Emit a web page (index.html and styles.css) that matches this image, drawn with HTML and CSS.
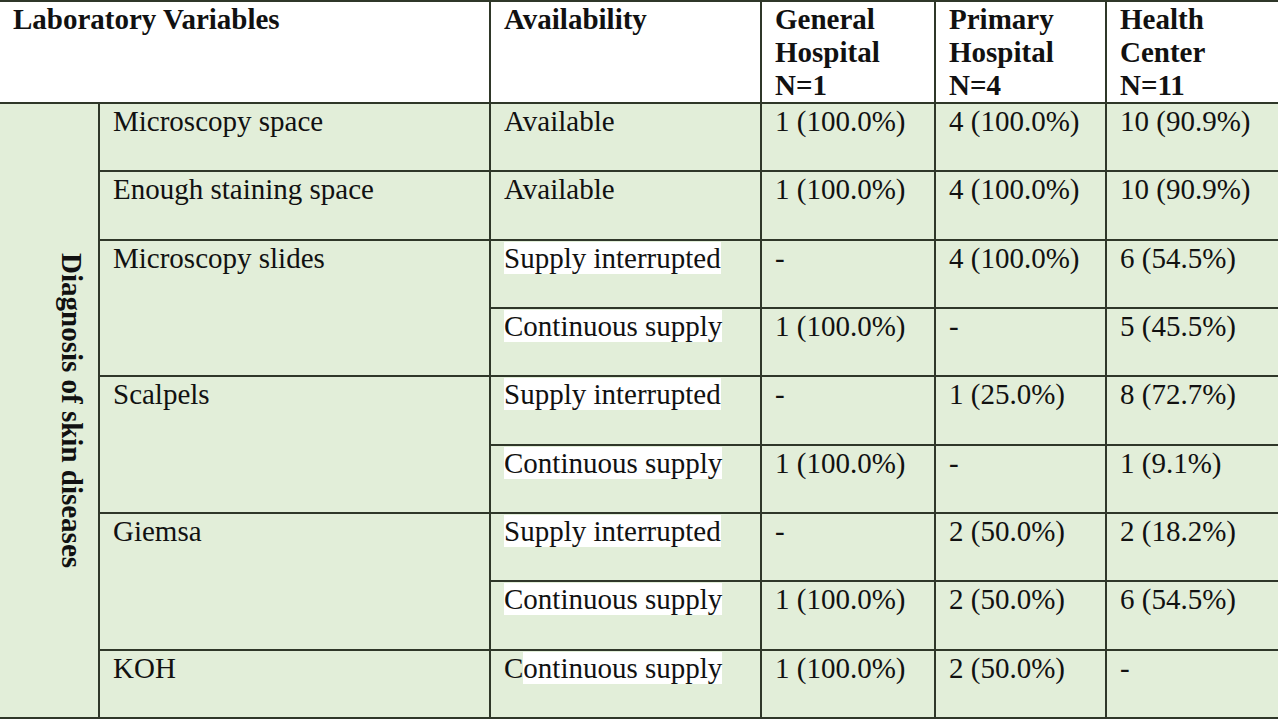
FILE: index.html
```html
<!DOCTYPE html>
<html lang="en">
<head>
<meta charset="utf-8">
<title>Laboratory Variables</title>
<link rel="stylesheet" href="styles.css">
</head>
<body>
<table class="lab">
  <colgroup>
    <col class="c-group">
    <col class="c-var">
    <col class="c-avail">
    <col class="c-gen">
    <col class="c-prim">
    <col class="c-hc">
  </colgroup>
  <thead>
    <tr class="head">
      <th colspan="2">Laboratory Variables</th>
      <th>Availability</th>
      <th>General<br>Hospital<br>N=1</th>
      <th>Primary<br>Hospital<br>N=4</th>
      <th>Health<br>Center<br>N=11</th>
    </tr>
  </thead>
  <tbody>
    <tr>
      <td class="group" rowspan="9"><div class="vtext">Diagnosis of skin diseases</div></td>
      <td>Microscopy space</td>
      <td>Available</td>
      <td>1 (100.0%)</td>
      <td>4 (100.0%)</td>
      <td>10 (90.9%)</td>
    </tr>
    <tr>
      <td>Enough staining space</td>
      <td>Available</td>
      <td>1 (100.0%)</td>
      <td>4 (100.0%)</td>
      <td>10 (90.9%)</td>
    </tr>
    <tr>
      <td rowspan="2">Microscopy slides</td>
      <td><span class="hl">Supply interrupted</span></td>
      <td>-</td>
      <td>4 (100.0%)</td>
      <td>6 (54.5%)</td>
    </tr>
    <tr>
      <td><span class="hl">Continuous supply</span></td>
      <td>1 (100.0%)</td>
      <td>-</td>
      <td>5 (45.5%)</td>
    </tr>
    <tr>
      <td rowspan="2">Scalpels</td>
      <td><span class="hl">Supply interrupted</span></td>
      <td>-</td>
      <td>1 (25.0%)</td>
      <td>8 (72.7%)</td>
    </tr>
    <tr>
      <td><span class="hl">Continuous supply</span></td>
      <td>1 (100.0%)</td>
      <td>-</td>
      <td>1 (9.1%)</td>
    </tr>
    <tr>
      <td rowspan="2">Giemsa</td>
      <td><span class="hl">Supply interrupted</span></td>
      <td>-</td>
      <td>2 (50.0%)</td>
      <td>2 (18.2%)</td>
    </tr>
    <tr>
      <td><span class="hl">Continuous supply</span></td>
      <td>1 (100.0%)</td>
      <td>2 (50.0%)</td>
      <td>6 (54.5%)</td>
    </tr>
    <tr>
      <td>KOH</td>
      <td>C<span class="hl">ontinuous supply</span></td>
      <td>1 (100.0%)</td>
      <td>2 (50.0%)</td>
      <td>-</td>
    </tr>
  </tbody>
</table>
</body>
</html>
```

FILE: styles.css
```css
html, body {
  margin: 0;
  padding: 0;
  background: #ffffff;
}

body {
  font-family: "Liberation Serif", "Times New Roman", serif;
  font-size: 29px;
  line-height: 33px;
  color: #111111;
}

.lab {
  width: 1278px;
  table-layout: fixed;
  border-collapse: collapse;
  margin-top: 0;
}

.c-group { width: 99px; }
.c-var { width: 391px; }
.c-avail { width: 271px; }
.c-gen { width: 174px; }
.c-prim { width: 171px; }
.c-hc { width: 172px; }

.lab th,
.lab td {
  border: 2px solid #2f3729;
  padding: 1px 8px 0 13px;
  vertical-align: top;
  text-align: left;
}

.lab tr > :first-child { border-left: none; }
.lab tr > :last-child { border-right: none; }

.head th {
  font-weight: bold;
  background: #ffffff;
  height: 99px;
}

.lab tbody tr {
  height: 68.33px;
}

.lab tbody td {
  background: #e2eed9;
}

.lab td.group {
  border-left: none;
  vertical-align: middle;
  padding: 0 10px 0 0;
}

.vtext {
  writing-mode: vertical-rl;
  font-weight: bold;
  white-space: nowrap;
  margin-left: auto;
  width: 33px;
}

.hl {
  background: #ffffff;
}
```
